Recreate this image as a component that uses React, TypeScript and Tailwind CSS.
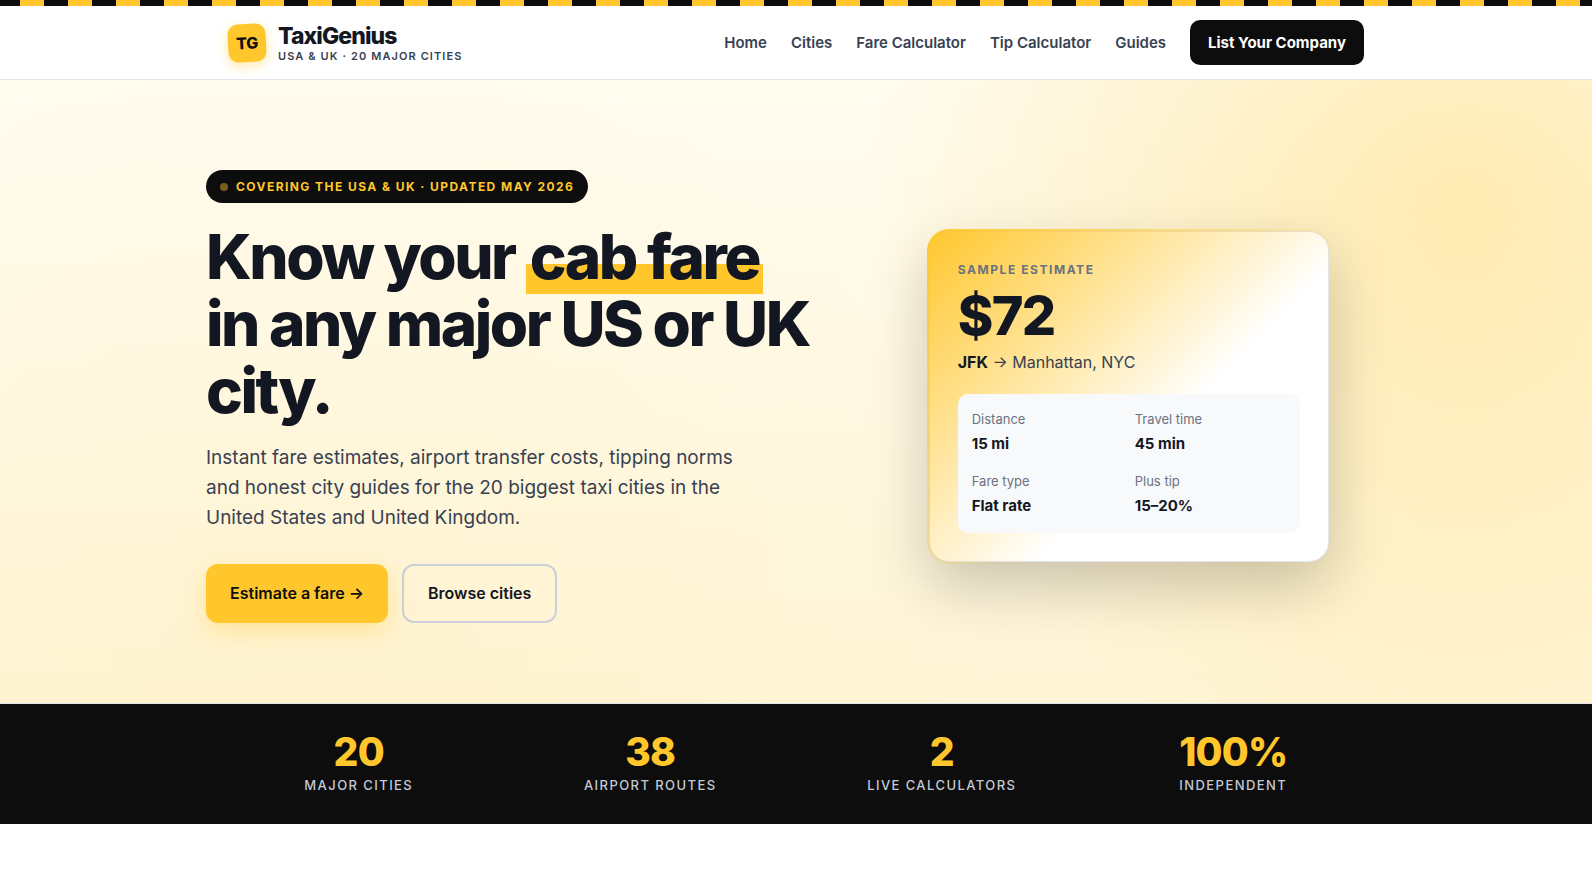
import React from "react";

interface StatProps {
  value: string;
  label: string;
}

const navLinks = ["Home", "Cities", "Fare Calculator", "Tip Calculator", "Guides"];

const tripDetails: StatProps[] = [
  { label: "Distance", value: "15 mi" },
  { label: "Travel time", value: "45 min" },
  { label: "Fare type", value: "Flat rate" },
  { label: "Plus tip", value: "15–20%" },
];

const stats: StatProps[] = [
  { value: "20", label: "Major cities" },
  { value: "38", label: "Airport routes" },
  { value: "2", label: "Live calculators" },
  { value: "100%", label: "Independent" },
];

const Header: React.FC = () => {
  return (
    <header className="bg-white border-b border-[#e2e5ea]">
      <div className="max-w-[1180px] mx-auto px-[22px] py-3.5 flex items-center justify-between">
        <a href="#" className="flex items-center gap-3">
          <span className="size-[38px] rounded-[10px] bg-[#ffc72c] text-[#0d0d0d] text-base font-extrabold tracking-[-0.02em] flex items-center justify-center -rotate-3 shadow-[0_4px_12px_rgba(255,199,44,0.4)]">
            TG
          </span>
          <span className="flex flex-col pt-0.5">
            <span className="text-[23px] leading-6 font-extrabold tracking-[-0.04em] text-[#131722]">
              TaxiGenius
            </span>
            <span className="text-[11px] leading-4 font-semibold tracking-[0.1em] uppercase text-[#374151]">
              USA &amp; UK · 20 major cities
            </span>
          </span>
        </a>
        <nav className="flex items-center gap-6 text-[15px] leading-[25px] font-semibold text-[#374151]">
          {navLinks.map((link) => (
            <a key={link} href="#">
              {link}
            </a>
          ))}
          <a href="#" className="bg-[#0d0d0d] text-white font-bold px-[18px] py-2.5 rounded-[10px]">
            List Your Company
          </a>
        </nav>
      </div>
    </header>
  );
};

const EstimateCard: React.FC = () => {
  return (
    <div className="relative isolate w-full max-w-[400px] justify-self-center bg-white border border-[#e2e5ea] rounded-[20px] p-7 shadow-[0_24px_60px_rgba(13,13,13,0.22)]">
      {/* Yellow glow laid over the card and its edge */}
      <div className="absolute -inset-[3px] -z-10 rounded-[22px] bg-[linear-gradient(135deg,#ffc72c_0%,transparent_60%)]" />
      <p className="text-xs leading-5 font-bold tracking-[0.13em] uppercase text-[#6b7280]">
        Sample estimate
      </p>
      <p className="mt-[9px] text-[54px] leading-[54px] font-extrabold tracking-[-0.03em] text-[#131722]">
        $72
      </p>
      <p className="mt-1.5 text-base leading-[27px] text-[#374151]">
        <strong className="font-bold text-[#131722]">JFK</strong> → Manhattan, NYC
      </p>
      <dl className="mt-[18px] grid grid-cols-2 gap-x-3 gap-y-[13px] rounded-[10px] bg-[#f8f9fb] p-3.5">
        {tripDetails.map((item) => (
          <div key={item.label}>
            <dt className="text-[13px] leading-[22px] text-[#6b7280]">{item.label}</dt>
            <dd className="text-[15px] leading-[27px] font-bold text-[#131722]">{item.value}</dd>
          </div>
        ))}
      </dl>
    </div>
  );
};

const Hero: React.FC = () => {
  return (
    <section className="border-b border-[#e2e5ea] bg-[radial-gradient(circle_600px_at_92%_20%,rgba(255,199,44,0.3),transparent),radial-gradient(circle_700px_at_20%_100%,rgba(255,199,44,0.05),transparent),linear-gradient(180deg,#fffcf0_0%,#fff5d6_100%)]">
      <div className="max-w-[1180px] mx-auto pt-[90px] pb-20 grid grid-cols-[1.2fr_1fr] gap-12 items-center">
        <div>
          <p className="w-fit flex items-center gap-2 rounded-full bg-[#0d0d0d] px-3.5 py-1.5 text-xs leading-[21px] font-bold tracking-[0.12em] uppercase text-[#ffc72c]">
            <span className="size-2 rounded-full bg-[#ffc72c] opacity-45" />
            Covering the USA &amp; UK · Updated May 2026
          </p>
          <h1 className="mt-5 text-[62px] leading-[67px] font-extrabold tracking-[-0.04em] text-[#131722]">
            Know your{" "}
            <span className="px-1 bg-[linear-gradient(180deg,transparent_60%,#ffc72c_60%)]">
              cab fare
            </span>
            <br />
            in any major US or UK city.
          </h1>
          <p className="mt-[19px] max-w-[540px] text-[19px] leading-[30px] text-[#374151]">
            Instant fare estimates, airport transfer costs, tipping norms and honest city guides
            for the 20 biggest taxi cities in the United States and United Kingdom.
          </p>
          <div className="mt-[31px] flex gap-3.5 text-base leading-[27px] font-semibold">
            <button className="rounded-xl bg-[#ffc72c] px-6 py-4 text-[#0d0d0d] shadow-[0_8px_24px_rgba(255,199,44,0.35)]">
              Estimate a fare →
            </button>
            <button className="rounded-xl border-2 border-[#c9ced8] px-6 py-3.5 text-[#131722]">
              Browse cities
            </button>
          </div>
        </div>
        <EstimateCard />
      </div>
    </section>
  );
};

const Stat: React.FC<StatProps> = ({ value, label }) => {
  return (
    <div className="text-center">
      <p className="text-[39px] leading-10 font-extrabold tracking-[-0.02em] text-[#ffc72c]">{value}</p>
      <p className="mt-0.5 text-[13px] leading-[22px] font-medium tracking-[0.11em] uppercase text-[#c3cad6]">
        {label}
      </p>
    </div>
  );
};

export default function App() {
  return (
    <div className="min-h-screen bg-white font-[Inter,sans-serif]">
      <div className="h-1.5 bg-[repeating-linear-gradient(90deg,#0d0d0d_0_24px,#ffc72c_24px_48px)] bg-[position:-4px_0] bg-[length:48px_6px]" />
      <Header />
      <main>
        <Hero />
        <section className="bg-[#0d0d0d]">
          <div className="max-w-[1180px] mx-auto px-[22px] py-7 grid grid-cols-4 gap-[30px]">
            {stats.map((stat) => (
              <Stat key={stat.label} value={stat.value} label={stat.label} />
            ))}
          </div>
        </section>
      </main>
    </div>
  );
}
